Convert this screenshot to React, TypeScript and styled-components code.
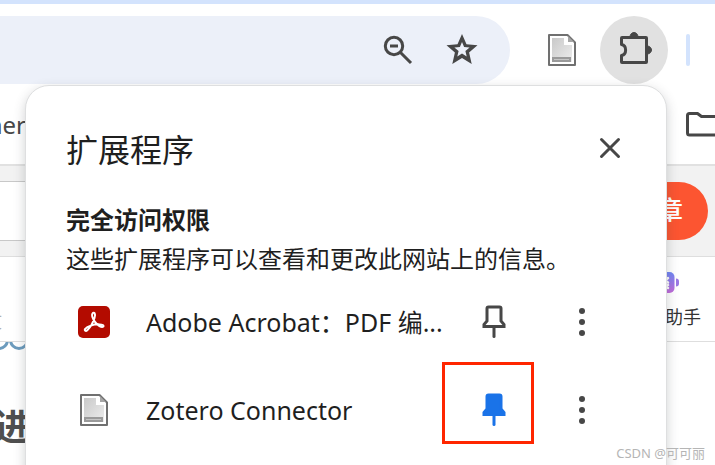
import React from "react";
import styled, { createGlobalStyle } from "styled-components";

const GlobalStyle = createGlobalStyle`
  *, *::before, *::after { box-sizing: border-box; }
  body {
    margin: 0;
    background: #fff;
    color: #1f1f1f;
    font-family: "Noto Sans", "Noto Sans CJK SC", sans-serif;
  }
  h1, h2, p, ul { margin: 0; padding: 0; }
  button { border: 0; padding: 0; background: none; font: inherit; color: inherit; cursor: pointer; }
  svg { display: block; }
`;

const Browser = styled.div`
  position: relative;
  height: 100vh;
  overflow: hidden;
`;

const TabStrip = styled.div`
  height: 4px;
  background: #d3e3fd;
`;

const Toolbar = styled.div`
  display: flex;
  align-items: center;
  height: 80px;
  padding: 12px 25px 0 0;
`;

const Omnibox = styled.div`
  flex: 1;
  display: flex;
  align-items: center;
  justify-content: flex-end;
  gap: 24px;
  height: 68px;
  padding-right: 28px;
  border-radius: 0 34px 34px 0;
  background: #ecf0f9;
`;

const IconButton = styled.button<{ $size?: number; $filled?: boolean }>`
  display: grid;
  place-items: center;
  flex: none;
  width: ${(p) => p.$size ?? 40}px;
  height: ${(p) => p.$size ?? 40}px;
  border-radius: 50%;
  color: #474747;
  background: ${(p) => (p.$filled ? "#e1e1e1" : "transparent")};
`;

const Actions = styled.div`
  display: flex;
  align-items: center;
  gap: 18px;
  padding-left: 32px;
`;

const Divider = styled.span`
  width: 4px;
  height: 32px;
  border-radius: 2px;
  background: #d3e3fd;
`;

const BookmarksBar = styled.div`
  display: flex;
  align-items: center;
  justify-content: space-between;
  height: 82px;
  border-bottom: 2px solid #e1e1e1;
  color: #474747;
  font-size: 24px;
`;

const Bookmark = styled.a`
  width: 26px;
  overflow: hidden;
  direction: rtl;
  color: inherit;
  text-decoration: none;
  white-space: nowrap;
`;

const SiteHeader = styled.header`
  display: flex;
  align-items: center;
  justify-content: space-between;
  height: 91px;
  padding-right: 7px;
  border-bottom: 1px solid #dedede;
  background: #f2f2f2;
`;

const TitleInput = styled.input`
  flex: 1;
  min-width: 0;
  height: 60px;
  border: solid #c8c8c8;
  border-width: 1px 0;
  background: #fff;
`;

const Publish = styled.button`
  height: 58px;
  padding: 0 25px 4px 30px;
  border-radius: 0 29px 29px 0;
  background: #fc5531;
  color: #fff;
  font-size: 26px;
  font-weight: 500;
`;

const EditorBar = styled.div`
  display: flex;
  justify-content: space-between;
  height: 85px;
  border-bottom: 1px solid #dedede;
  font-size: 18px;
`;

const FormatLabel = styled.span`
  width: 2px;
  padding-top: 50px;
  overflow: hidden;
  direction: rtl;
  color: #b0b0b0;
`;

const Assistant = styled.button`
  display: flex;
  flex-direction: column;
  align-items: flex-end;
  gap: 10px;
  padding: 14px 14px 0 0;
  color: #333;
  line-height: 24px;
`;

const AssistantIcon = styled.span`
  padding-right: 22px;
`;

const Article = styled.main`
  color: #4f4f4f;
`;

const LogoArc = styled.div`
  height: 9px;
  overflow: hidden;
`;

const ArticleHeading = styled.h2`
  display: flex;
  justify-content: flex-end;
  width: 30px;
  padding-top: 48px;
  font-size: 36px;
  line-height: 56px;
  white-space: nowrap;
`;

const Popup = styled.section`
  position: absolute;
  top: 85px;
  right: 48px;
  bottom: -24px;
  left: 25px;
  padding: 37px 32px 0 40px;
  border: 1px solid #dedfe0;
  border-radius: 24px;
  background: #fff;
  box-shadow: 0 4px 12px rgba(60, 64, 67, 0.24);
`;

const PopupHeader = styled.header`
  display: flex;
  align-items: center;
  justify-content: space-between;
  height: 50px;
`;

const PopupTitle = styled.h1`
  padding-top: 4px;
  font-size: 32px;
  font-weight: 400;
  line-height: 48px;
`;

const AccessTitle = styled.h2`
  margin-top: 27px;
  font-size: 24px;
  font-weight: 700;
  line-height: 40px;
`;

const AccessText = styled.p`
  font-size: 24px;
  line-height: 38px;
  white-space: nowrap;
`;

const ExtensionList = styled.ul`
  list-style: none;
`;

const Extension = styled.li`
  display: flex;
  align-items: center;
  height: 88px;
  padding: 0 32px 0 12px;
`;

const ExtensionName = styled.button`
  flex: 1;
  display: flex;
  align-items: center;
  gap: 36px;
  min-width: 0;
  font-size: 25px;
  line-height: 36px;
  text-align: left;
  white-space: nowrap;
`;

const ExtensionControls = styled.div`
  display: flex;
  gap: 48px;
`;

const Highlight = styled.div`
  position: absolute;
  top: 276px;
  right: 132px;
  width: 92px;
  height: 82px;
  border: 3px solid #ff2600;
  pointer-events: none;
`;

const Watermark = styled.small`
  position: absolute;
  right: 10px;
  bottom: 2px;
  color: #b5b5b5;
  font-size: 13px;
  line-height: 20px;
`;

const ZoomOutIcon = () => (
  <svg width="40" height="40" viewBox="0 0 40 40" fill="none" stroke="currentColor" strokeWidth="3">
    <circle cx="16" cy="16" r="8.7" />
    <path d="M12 16h8M22.5 22.5 33 33" />
  </svg>
);

const StarIcon = () => (
  <svg width="40" height="40" viewBox="0 0 40 40" fill="currentColor" fillRule="evenodd">
    <path d="M20 4l4.500 10.300 11 .9-8.400 7.300 2.600 11.500L20 27.900l-9.700 6.100 2.600-11.500-8.400-7.300 11-.9zM20 12l-2.100 5-5.500.5 4.200 3.600-1.300 5.400 4.700-2.900 4.700 2.900-1.300-5.400 4.200-3.600-5.500-.5z" />
  </svg>
);

const DocumentIcon = () => (
  <svg width="32" height="32" viewBox="0 0 32 32">
    <defs>
      <linearGradient id="paper" x1="0" y1="0" x2="1" y2="1">
        <stop offset="0" stopColor="#c9c9c9" />
        <stop offset="1" stopColor="#ededed" />
      </linearGradient>
    </defs>
    <path d="M3 1h18.500L29 8.500V31H3z" fill="#fff" stroke="#707070" strokeWidth="2" strokeLinejoin="round" />
    <path d="M6 4h12v7h8v17H6z" fill="url(#paper)" />
    <path d="M22 2v6h6z" fill="#a6a6a6" />
    <path d="M7 24h17v3H7z" fill="#c5c5c5" stroke="#9a9a9a" strokeWidth="2" />
  </svg>
);

const PuzzleIcon = () => (
  <svg width="40" height="40" viewBox="0 0 40 40">
    <path
      d="M8 7.500H32q.5 0 .5.500V32q0 .5-.5.500H8q-.5 0-.5-.500V25.500C13 24.500 13 15.500 7.500 14.500V8q0-.5.500-.500z"
      fill="none"
      stroke="currentColor"
      strokeWidth="3"
      strokeLinejoin="round"
    />
    <path d="M16 7a4 4.500 0 0 1 8 0zM33 16a4.500 4 0 0 1 0 8z" fill="currentColor" stroke="currentColor" strokeWidth="1" />
  </svg>
);

const FolderIcon = () => (
  <svg width="29" height="26" viewBox="0 0 29 26" fill="none" stroke="currentColor" strokeWidth="3" strokeLinejoin="round">
    <path d="M34 5.500H15.500L11.500 2.500H3.500Q1.500 2.500 1.500 4.500V22Q1.500 24 3.500 24H34" />
  </svg>
);

const AssistantMark = () => (
  <svg width="28" height="24" viewBox="0 0 28 24">
    <defs>
      <linearGradient id="assist" x1="0" y1="0" x2="0" y2="1">
        <stop offset="0" stopColor="#6f86f4" />
        <stop offset="1" stopColor="#c26ad9" />
      </linearGradient>
    </defs>
    <rect x="0" y="1" width="23.500" height="21" rx="5" fill="url(#assist)" />
    <path d="M17 7l-3 2.500 3 2M17 14l-2 1.500 2 1.500" fill="none" stroke="#fff" strokeWidth="2.500" strokeLinecap="round" />
    <path d="M25 7.500q3 0 3 3v2q0 3-3 3z" fill="#9b78e5" />
  </svg>
);

const AcrobatIcon = () => (
  <svg width="32" height="32" viewBox="0 0 32 32">
    <rect width="32" height="32" rx="5" fill="#b30b00" />
    <path
      d="M14.500 7.500c1.500-2.200 3.600.2 2 4.500-1.500 4.500-4.800 10-7.200 12.200-1.600 1.400-3.300.2-2.100-1.300 2.100-2.500 8.100-4.800 14.300-4.500 2.900.1 4.700 1.100 3.800 2.100-1.700 1.600-5.700-1.200-8.300-4.700-2.300-3.100-3.500-6.500-2.500-8.300z"
      fill="none"
      stroke="#fff"
      strokeWidth="2"
      strokeLinejoin="round"
    />
  </svg>
);

const CloseIcon = () => (
  <svg width="40" height="40" viewBox="0 0 40 40" stroke="currentColor" strokeWidth="3" strokeLinecap="round">
    <path d="M11.500 11.500l17 17M28.500 11.500l-17 17" />
  </svg>
);

const PinIcon = ({ pinned }: { pinned?: boolean }) => (
  <svg width="40" height="40" viewBox="0 0 40 40" fill={pinned ? "#1a73e8" : "none"} stroke={pinned ? "#1a73e8" : "currentColor"} strokeWidth="3">
    <path d="M14.500 5h11q1.500 0 1.500 1.500V19l3 3.500V24.500H10V22.500L13 19V6.500q0-1.500 1.500-1.500z" />
    <path d="M20 25v9.500" strokeLinecap="round" />
  </svg>
);

const MoreIcon = () => (
  <svg width="40" height="40" viewBox="0 0 40 40" fill="currentColor">
    <circle cx="20" cy="9" r="3" />
    <circle cx="20" cy="20" r="3" />
    <circle cx="20" cy="31" r="3" />
  </svg>
);

const extensions = [
  { name: "Adobe Acrobat：PDF 编...", icon: <AcrobatIcon />, pinned: false },
  { name: "Zotero Connector", icon: <DocumentIcon />, pinned: true },
];

export default function App() {
  return (
    <>
      <GlobalStyle />
      <Browser>
        <TabStrip />
        <Toolbar>
          <Omnibox>
            <IconButton aria-label="缩小"><ZoomOutIcon /></IconButton>
            <IconButton aria-label="收藏"><StarIcon /></IconButton>
          </Omnibox>
          <Actions>
            <IconButton aria-label="Zotero"><DocumentIcon /></IconButton>
            <IconButton aria-label="扩展程序" $size={68} $filled><PuzzleIcon /></IconButton>
            <Divider />
          </Actions>
        </Toolbar>
        <BookmarksBar>
          <Bookmark href="#">her</Bookmark>
          <FolderIcon />
        </BookmarksBar>
        <SiteHeader>
          <TitleInput aria-label="标题" />
          <Publish>章</Publish>
        </SiteHeader>
        <EditorBar>
          <FormatLabel>文</FormatLabel>
          <Assistant>
            <AssistantIcon><AssistantMark /></AssistantIcon>
            助手
          </Assistant>
        </EditorBar>
        <Article>
          <LogoArc>
            <svg width="30" height="9" viewBox="0 0 30 9" fill="none" stroke="#6c9bbd" strokeWidth="3">
              <circle cx="-1" cy="-2" r="8.500" />
              <circle cx="19" cy="-2" r="8.500" />
            </svg>
          </LogoArc>
          <ArticleHeading>进</ArticleHeading>
        </Article>

        <Popup aria-labelledby="extensions-title">
          <PopupHeader>
            <PopupTitle id="extensions-title">扩展程序</PopupTitle>
            <IconButton aria-label="关闭" $size={48}><CloseIcon /></IconButton>
          </PopupHeader>
          <AccessTitle>完全访问权限</AccessTitle>
          <AccessText>这些扩展程序可以查看和更改此网站上的信息。</AccessText>
          <ExtensionList>
            {extensions.map((item) => (
              <Extension key={item.name}>
                <ExtensionName>
                  {item.icon}
                  <span>{item.name}</span>
                </ExtensionName>
                <ExtensionControls>
                  <IconButton aria-label="固定" aria-pressed={item.pinned}><PinIcon pinned={item.pinned} /></IconButton>
                  <IconButton aria-label="更多选项"><MoreIcon /></IconButton>
                </ExtensionControls>
              </Extension>
            ))}
          </ExtensionList>
          <Highlight />
        </Popup>
        <Watermark>CSDN @可可丽</Watermark>
      </Browser>
    </>
  );
}
